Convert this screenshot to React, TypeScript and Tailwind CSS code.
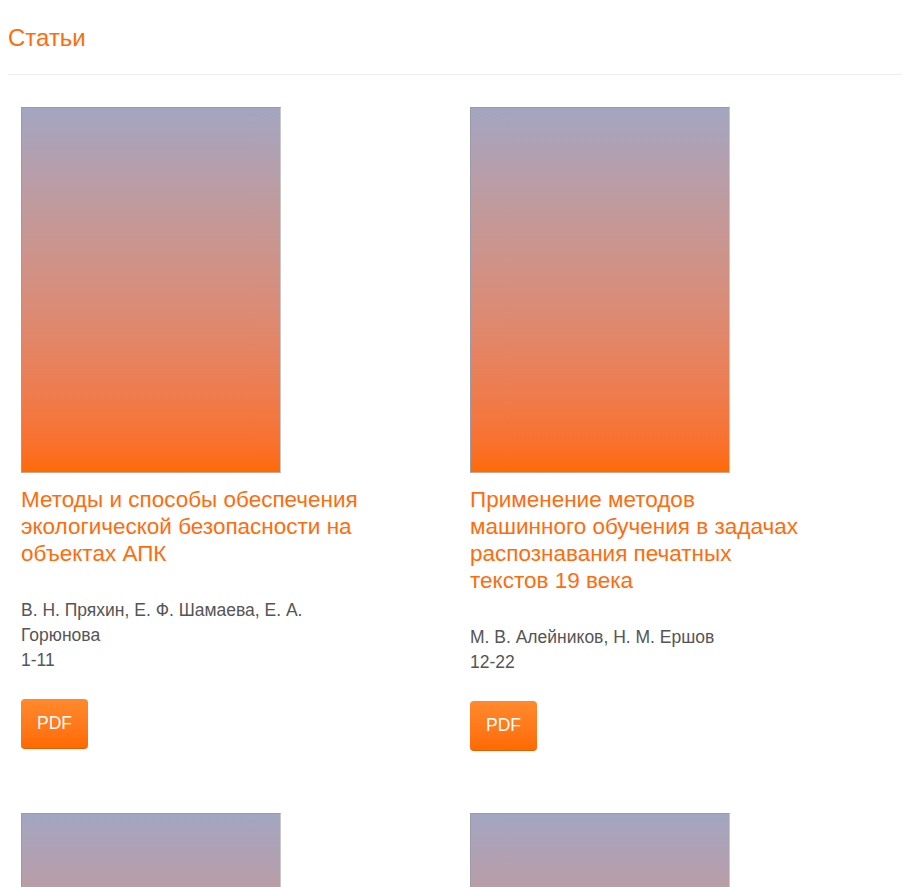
const articles = [
  {
    title: "Методы и способы обеспечения экологической безопасности на объектах АПК",
    authors: "В. Н. Пряхин, Е. Ф. Шамаева, Е. А. Горюнова",
    pages: "1-11",
  },
  {
    title: "Применение методов машинного обучения в задачах распознавания печатных текстов 19 века",
    authors: "М. В. Алейников, Н. М. Ершов",
    pages: "12-22",
  },
  {
    title: "Моделирование процессов в распределённых системах",
    authors: "А. С. Иванов",
    pages: "23-31",
  },
  {
    title: "Анализ данных в научных исследованиях",
    authors: "П. Р. Смирнов",
    pages: "32-40",
  },
];

function ArticleCard({ a }: { a: (typeof articles)[number] }) {
  return (
    <div className="px-[13px]">
      <div className="w-[260px] h-[366px] border border-[#9a9aa8] border-r-[#c8c8c8] border-b-[#c8a890] bg-gradient-to-b from-[#a3a5c1] to-[#ff6a00]" />
      <div className="max-w-[340px]">
        <a href="#" className="block mt-[13px] text-[22.5px] leading-[27px] text-[#ff6c0d]">
          {a.title}
        </a>
        <div className="mt-[31px] text-[17.5px] leading-[25px] text-[#555]">
          <div>{a.authors}</div>
          <div>{a.pages}</div>
        </div>
        <button className="mt-[26px] px-4 py-[14px] rounded-[4px] text-[17.5px] leading-[21px] text-white bg-gradient-to-b from-[#ff8a2c] to-[#ff6a00] border-b border-[#e55f00]">
          PDF
        </button>
      </div>
    </div>
  );
}

export default function App() {
  return (
    <div className="min-h-screen bg-white px-2 font-['Liberation_Sans',Arial,sans-serif]">
      <h1 className="pt-[25px] text-[24px] leading-[26px] text-[#ff6c0d]">Статьи</h1>
      <hr className="mt-[23px] border-0 border-t border-[#eee]" />
      <div className="grid grid-cols-[449px_449px] gap-y-[62px] pt-[32px]">
        {articles.map((a) => (
          <ArticleCard key={a.title} a={a} />
        ))}
      </div>
    </div>
  );
}
